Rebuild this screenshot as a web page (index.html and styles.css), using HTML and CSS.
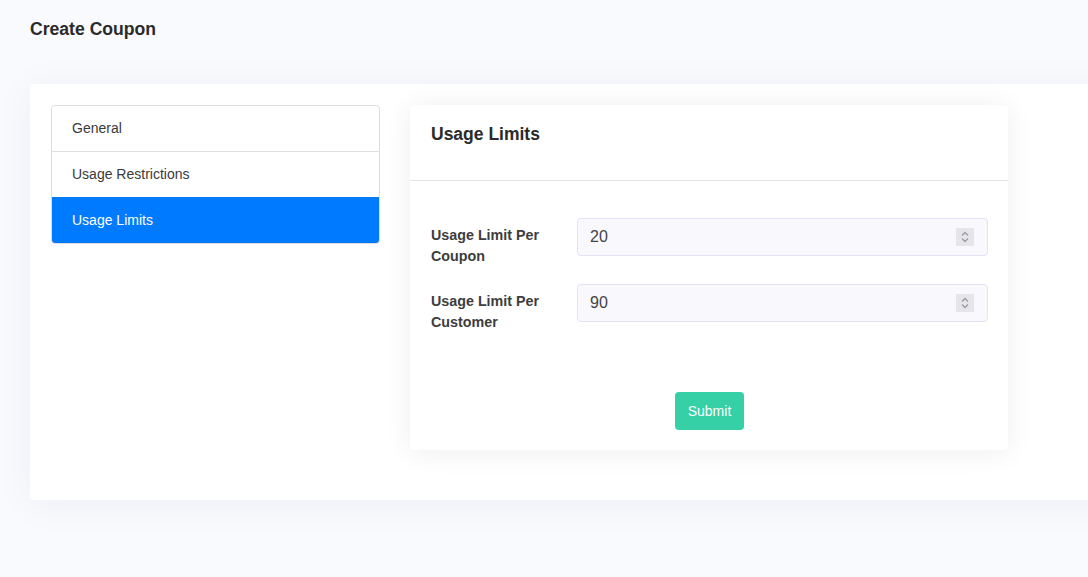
FILE: index.html
```html
<!DOCTYPE html>
<html lang="en">
<head>
<meta charset="utf-8">
<title>Create Coupon</title>
<link rel="stylesheet" href="styles.css">
</head>
<body>
<div class="page">
  <h1 class="page-title">Create Coupon</h1>
  <div class="outer-card">
    <div class="tab-list">
      <div class="tab-item">General</div>
      <div class="tab-item">Usage Restrictions</div>
      <div class="tab-item active">Usage Limits</div>
    </div>
    <div class="panel">
      <div class="panel-header">
        <h2 class="panel-title">Usage Limits</h2>
      </div>
      <form class="panel-body">
        <div class="form-row">
          <label class="form-label">Usage Limit Per Coupon</label>
          <div class="input-wrap">
            <input class="form-input" type="text" value="20">
            <span class="spinner"><svg width="18" height="18" viewBox="0 0 18 18"><path d="M6 7.5 L9 4.5 L12 7.5" fill="none" stroke="#9a9aa3" stroke-width="1.3"/><path d="M6 10.5 L9 13.5 L12 10.5" fill="none" stroke="#9a9aa3" stroke-width="1.3"/></svg></span>
          </div>
        </div>
        <div class="form-row">
          <label class="form-label">Usage Limit Per Customer</label>
          <div class="input-wrap">
            <input class="form-input" type="text" value="90">
            <span class="spinner"><svg width="18" height="18" viewBox="0 0 18 18"><path d="M6 7.5 L9 4.5 L12 7.5" fill="none" stroke="#9a9aa3" stroke-width="1.3"/><path d="M6 10.5 L9 13.5 L12 10.5" fill="none" stroke="#9a9aa3" stroke-width="1.3"/></svg></span>
          </div>
        </div>
        <div class="form-actions">
          <button type="button" class="btn-submit">Submit</button>
        </div>
      </form>
    </div>
  </div>
</div>
</body>
</html>
```

FILE: styles.css
```css
* { box-sizing: border-box; }
html, body {
  margin: 0;
  padding: 0;
  background: #f9fafe;
  overflow: hidden;
  font-family: "Liberation Sans", Arial, sans-serif;
  color: #333;
}
.page {
  padding: 19px 0 0 30px;
  width: 1200px;
  height: 577px;
}
.page-title {
  margin: 0;
  font-size: 17.6px;
  line-height: 21px;
  font-weight: bold;
  color: #2a2a2a;
}
.outer-card {
  margin-top: 44px;
  width: 1140px;
  height: 416px;
  background: #fff;
  border-radius: 4px;
  box-shadow: 0 4px 40px rgba(20, 20, 60, 0.05);
  padding: 21px 21px 0 21px;
  display: flex;
  align-items: flex-start;
  gap: 30px;
}
.tab-list {
  width: 329px;
  border: 1px solid #dedede;
  border-radius: 4px;
  overflow: hidden;
  background: #fff;
}
.tab-item {
  height: 46px;
  padding: 0 20px 2px;
  display: flex;
  align-items: center;
  font-size: 14px;
  color: #3a3a3a;
  border-top: 1px solid #dedede;
}
.tab-item:first-child { border-top: none; height: 45px; }
.tab-item.active {
  background: #007bff;
  color: #fff;
  border-top-color: #007bff;
}
.panel {
  width: 598px;
  background: #fff;
  border-radius: 4px;
  box-shadow: 0 2px 28px rgba(30, 30, 60, 0.07);
}
.panel-header {
  height: 76px;
  padding: 19px 21px 0;
  border-bottom: 1px solid #e4e4e8;
}
.panel-title {
  margin: 0;
  font-size: 17.5px;
  line-height: 21px;
  font-weight: bold;
  color: #2a2a2a;
}
.panel-body {
  margin: 0;
  padding: 37px 20px 20px 21px;
}
.form-row {
  display: flex;
  align-items: flex-start;
  margin-bottom: 17px;
}
.form-label {
  width: 146px;
  flex: none;
  padding: 7px 16px 0 0;
  font-size: 14.3px;
  line-height: 21px;
  font-weight: bold;
  color: #3d3d3d;
}
.input-wrap {
  flex: 1;
  position: relative;
}
.form-input {
  display: block;
  width: 100%;
  height: 38px;
  padding: 0 12px;
  border: 1px solid #e3e2f6;
  border-radius: 4px;
  background: #f8f8fd;
  font-family: "Liberation Sans", Arial, sans-serif;
  font-size: 16px;
  color: #444;
  outline: none;
}
.spinner {
  position: absolute;
  right: 14px;
  top: 10px;
  width: 18px;
  height: 18px;
  background: #e6e6ea;
  display: block;
}
.spinner svg { display: block; }
.form-actions {
  display: flex;
  justify-content: center;
  padding-top: 42px;
}
.btn-submit {
  width: 69px;
  height: 38px;
  border: none;
  border-radius: 4px;
  background: #35d0a5;
  color: #fff;
  font-family: "Liberation Sans", Arial, sans-serif;
  font-size: 14px;
  padding: 0;
}
```
